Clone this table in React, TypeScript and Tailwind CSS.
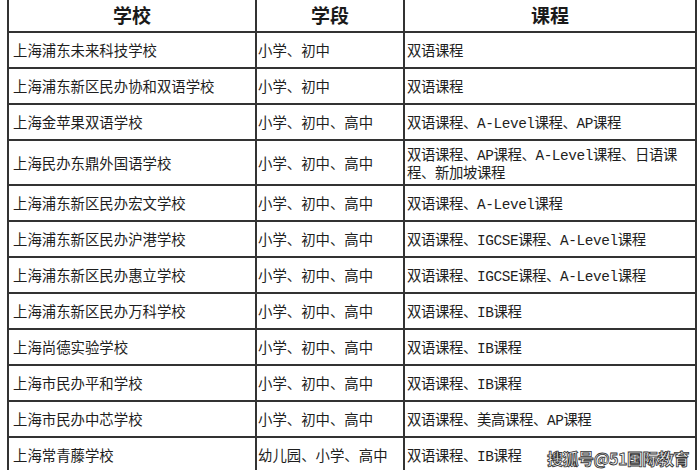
import type React from "react";

type Row = {
  school: string;
  stage: string;
  courses: React.ReactNode;
  tall?: boolean;
};

const rows: Row[] = [
  { school: "上海浦东未来科技学校", stage: "小学、初中", courses: "双语课程" },
  { school: "上海浦东新区民办协和双语学校", stage: "小学、初中", courses: "双语课程" },
  { school: "上海金苹果双语学校", stage: "小学、初中、高中", courses: "双语课程、A-Level课程、AP课程" },
  {
    school: "上海民办东鼎外国语学校",
    stage: "小学、初中、高中",
    courses: (
      <>
        双语课程、AP课程、A-Level课程、日语课
        <br />
        程、新加坡课程
      </>
    ),
    tall: true,
  },
  { school: "上海浦东新区民办宏文学校", stage: "小学、初中、高中", courses: "双语课程、A-Level课程" },
  { school: "上海浦东新区民办沪港学校", stage: "小学、初中、高中", courses: "双语课程、IGCSE课程、A-Level课程" },
  { school: "上海浦东新区民办惠立学校", stage: "小学、初中、高中", courses: "双语课程、IGCSE课程、A-Level课程" },
  { school: "上海浦东新区民办万科学校", stage: "小学、初中、高中", courses: "双语课程、IB课程" },
  { school: "上海尚德实验学校", stage: "小学、初中、高中", courses: "双语课程、IB课程" },
  { school: "上海市民办平和学校", stage: "小学、初中、高中", courses: "双语课程、IB课程" },
  { school: "上海市民办中芯学校", stage: "小学、初中、高中", courses: "双语课程、美高课程、AP课程" },
  { school: "上海常青藤学校", stage: "幼儿园、小学、高中", courses: "双语课程、IB课程" },
];

const cjk = "font-['Noto_Sans_CJK_SC',sans-serif]";
const mixed = "font-['Liberation_Mono','Noto_Sans_CJK_SC',monospace]";

export default function App() {
  return (
    <div className="relative h-[470px] w-[700px] overflow-hidden bg-white pl-[7px]">
      <div className="w-[690px] border-x-2 border-[#333]">
        <div className="grid h-[33px] grid-cols-[248px_148px_290px] border-b-2 border-[#333] text-[19px] font-bold text-[#1a1a1a]">
          <div className={`flex items-center justify-center border-r-2 border-[#333] ${cjk}`}>学校</div>
          <div className={`flex items-center justify-center border-r-2 border-[#333] ${cjk}`}>学段</div>
          <div className={`flex items-center justify-center ${cjk}`}>课程</div>
        </div>
        {rows.map((r) => (
          <div
            key={r.school}
            className={`grid grid-cols-[248px_148px_290px] border-b-2 border-[#333] text-[#1e1e1e] ${
              r.tall ? "h-[45px]" : "h-[36px]"
            }`}
          >
            <div className={`flex items-center border-r-2 border-[#333] pl-[4px] text-[14.4px] ${cjk}`}>
              {r.school}
            </div>
            <div className={`flex items-center border-r-2 border-[#333] pl-[1px] text-[14.4px] ${cjk}`}>
              {r.stage}
            </div>
            <div className={`flex items-center pl-[2px] pt-[4px] text-[14.4px] leading-[18px] tracking-[-0.4px] ${mixed}`}>
              <div>{r.courses}</div>
            </div>
          </div>
        ))}
      </div>
      <div
        className={`absolute left-[547px] top-[446px] text-[16px] font-bold tracking-[-0.5px] text-[#f4f4f4] [-webkit-text-stroke:0.8px_#333] ${cjk}`}
      >
        搜狐号@51国际教育
      </div>
    </div>
  );
}
